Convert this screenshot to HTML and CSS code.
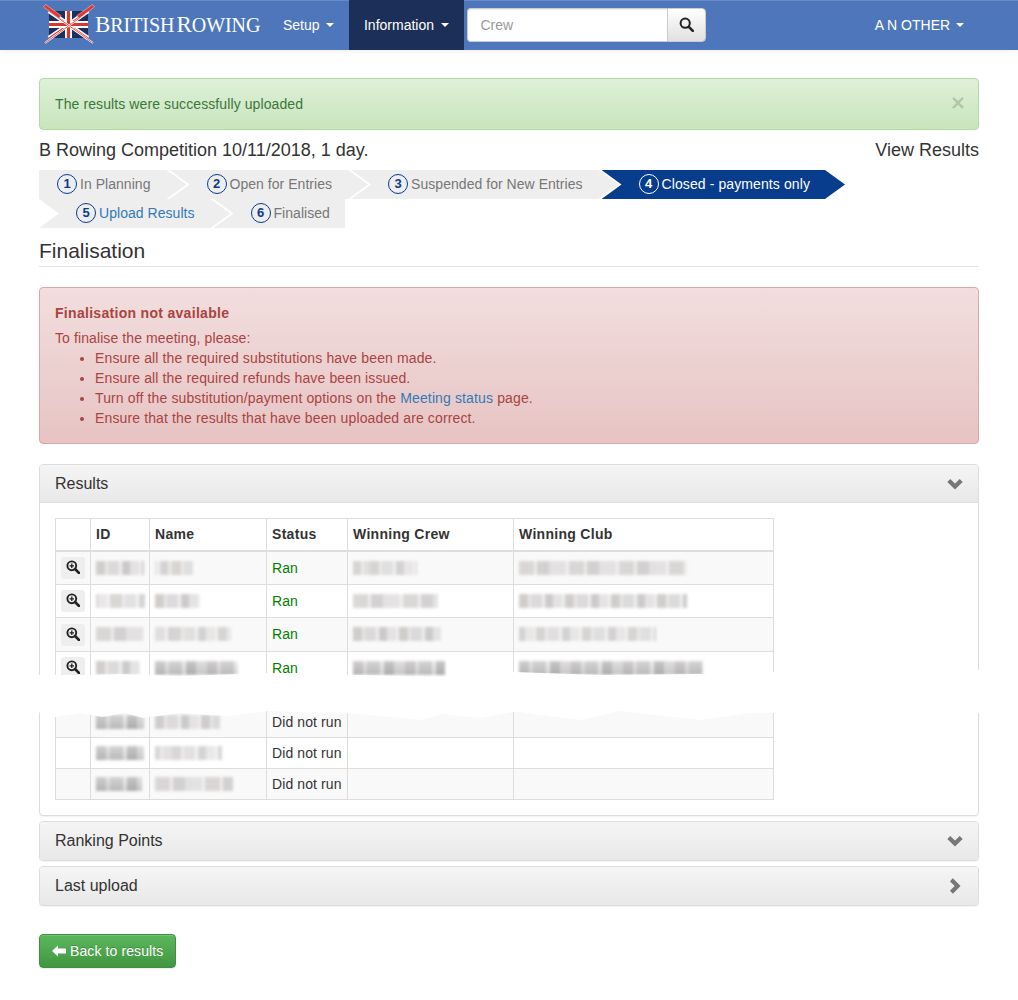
FILE: index.html
```html
<!DOCTYPE html>
<html lang="en">
<head>
<meta charset="utf-8">
<title>Finalisation</title>
<link rel="stylesheet" href="styles.css">
</head>
<body>
<svg class="sprites" width="0" height="0" aria-hidden="true">
  <symbol id="zoom-in" viewBox="0 0 14 14">
    <circle cx="5.8" cy="5.8" r="4.4" fill="none" stroke="#222" stroke-width="1.9"/>
    <path d="M9 9l4 4" stroke="#222" stroke-width="2.6" stroke-linecap="round"/>
    <path d="M3.6 5.8h4.4M5.8 3.6V8" stroke="#222" stroke-width="1.3"/>
  </symbol>
  <symbol id="chev-down" viewBox="0 0 16 16">
    <path d="M1.800 4.400L8 10.600l6.200-6.200" fill="none" stroke="#777" stroke-width="4.200"/>
  </symbol>
  <symbol id="chev-right" viewBox="0 0 16 16">
    <path d="M4.400 1.800L10.600 8 4.400 14.200" fill="none" stroke="#777" stroke-width="4.200"/>
  </symbol>
</svg>

<nav class="navbar">
  <div class="navbar-inner">
    <a class="brand" href="#">
      <svg class="brand-mark" width="52" height="44" viewBox="0 0 52 44" aria-hidden="true">
        <rect x="6" y="11" width="39" height="27" fill="#1d2f5c"/>
        <path d="M6 11l39 27M45 11L6 38" stroke="#fff" stroke-width="4.500"/>
        <path d="M6 11l39 27M45 11L6 38" stroke="#d8392f" stroke-width="1.300"/>
        <path d="M25.500 11v27M6 24.500h39" stroke="#fff" stroke-width="7"/>
        <path d="M25.500 11v27M6 24.500h39" stroke="#d8392f" stroke-width="3.200"/>
        <path d="M2 43L38 17" stroke="#fff" stroke-width="1.800"/>
        <path d="M2 43L38 17" stroke="#e0483c" stroke-width="0.900"/>
        <path d="M50 43L14 17" stroke="#fff" stroke-width="1.800"/>
        <path d="M50 43L14 17" stroke="#e0483c" stroke-width="0.900"/>
        <path d="M0.500 7L2.500 4.500 18 15.500 16 18.500z" fill="#e0382f" stroke="#f4d5d0" stroke-width="0.500"/>
        <path d="M51.500 7L49.500 4.500 34 15.500 36 18.500z" fill="#e0382f" stroke="#f4d5d0" stroke-width="0.500"/>
      </svg>
      <span class="brand-name"><span class="brand-cap">B</span>RITISH<span class="brand-cap brand-second">R</span>OWING</span>
    </a>
    <ul class="nav-list">
      <li><a class="nav-link" href="#">Setup <span class="caret"></span></a></li>
      <li><a class="nav-link nav-link-active" href="#">Information <span class="caret"></span></a></li>
    </ul>
    <form class="search">
      <input class="search-input" type="text" placeholder="Crew">
      <button class="search-btn" type="button" aria-label="Search">
        <svg width="15" height="15" viewBox="0 0 15 15" aria-hidden="true">
          <circle cx="6.200" cy="6.200" r="4.600" fill="none" stroke="#222" stroke-width="2"/>
          <path d="M9.800 9.800l4 4" stroke="#222" stroke-width="2.600" stroke-linecap="round"/>
        </svg>
      </button>
    </form>
    <a class="nav-link nav-user" href="#">A N OTHER <span class="caret"></span></a>
  </div>
</nav>

<main class="container">
  <div class="alert alert-success">
    <span>The results were successfully uploaded</span>
    <span class="close">×</span>
  </div>

  <div class="meeting-row">
    <span>B Rowing Competition 10/11/2018, 1 day.</span>
    <a class="meeting-link" href="#">View Results</a>
  </div>

  <ol class="steps">
    <li class="step step-first"><span class="step-num">1</span>In Planning</li>
    <li class="step"><span class="step-num">2</span>Open for Entries</li>
    <li class="step"><span class="step-num">3</span>Suspended for New Entries</li>
    <li class="step step-current"><span class="step-num">4</span>Closed - payments only</li>
    <li class="step"><span class="step-num">5</span><a class="link" href="#">Upload Results</a></li>
    <li class="step step-last"><span class="step-num">6</span>Finalised</li>
  </ol>

  <h2 class="page-title">Finalisation</h2>

  <div class="alert alert-danger">
    <div class="danger-title">Finalisation not available</div>
    <div>To finalise the meeting, please:</div>
    <ul class="danger-list">
      <li>Ensure all the required substitutions have been made.</li>
      <li>Ensure all the required refunds have been issued.</li>
      <li>Turn off the substitution/payment options on the <a class="link" href="#">Meeting status</a> page.</li>
      <li>Ensure that the results that have been uploaded are correct.</li>
    </ul>
  </div>

  <section class="panel panel-results">
    <div class="panel-heading">
      <span>Results</span>
      <svg class="panel-icon" width="16" height="16"><use href="#chev-down"/></svg>
    </div>
    <div class="panel-body">
      <table class="results">
        <colgroup>
          <col class="c-action"><col class="c-id"><col class="c-name"><col class="c-status"><col class="c-crew"><col class="c-club">
        </colgroup>
        <thead>
          <tr><th></th><th>ID</th><th>Name</th><th>Status</th><th>Winning Crew</th><th>Winning Club</th></tr>
        </thead>
        <tbody>
          <tr class="alt tall-plus">
            <td class="cell-btn"><button class="icon-btn" type="button" aria-label="View"><svg width="14" height="14"><use href="#zoom-in"/></svg></button></td>
            <td><span class="smudge" style="width:48px"></span></td>
            <td><span class="smudge smudge-b" style="width:38px"></span></td>
            <td class="ran">Ran</td>
            <td><span class="smudge smudge-b" style="width:64px"></span></td>
            <td><span class="smudge smudge-c" style="width:168px"></span></td>
          </tr>
          <tr class="tall">
            <td class="cell-btn"><button class="icon-btn" type="button" aria-label="View"><svg width="14" height="14"><use href="#zoom-in"/></svg></button></td>
            <td><span class="smudge smudge-b" style="width:49px"></span></td>
            <td><span class="smudge" style="width:45px"></span></td>
            <td class="ran">Ran</td>
            <td><span class="smudge smudge-c" style="width:85px"></span></td>
            <td><span class="smudge" style="width:168px"></span></td>
          </tr>
          <tr class="alt tall-plus tall-up">
            <td class="cell-btn"><button class="icon-btn" type="button" aria-label="View"><svg width="14" height="14"><use href="#zoom-in"/></svg></button></td>
            <td><span class="smudge smudge-c" style="width:48px"></span></td>
            <td><span class="smudge smudge-b" style="width:76px"></span></td>
            <td class="ran">Ran</td>
            <td><span class="smudge" style="width:88px"></span></td>
            <td><span class="smudge smudge-b" style="width:137px"></span></td>
          </tr>
          <tr class="tall">
            <td class="cell-btn"><button class="icon-btn" type="button" aria-label="View"><svg width="14" height="14"><use href="#zoom-in"/></svg></button></td>
            <td><span class="smudge" style="width:44px"></span></td>
            <td><span class="smudge smudge-dark" style="width:83px"></span></td>
            <td class="ran">Ran</td>
            <td><span class="smudge smudge-dark" style="width:92px"></span></td>
            <td><span class="smudge smudge-dark" style="width:184px"></span></td>
          </tr>
          <tr class="hidden-row"><td></td><td></td><td></td><td></td><td></td><td></td></tr>
          <tr class="alt">
            <td></td>
            <td><span class="smudge smudge-dark" style="width:48px"></span></td>
            <td><span class="smudge" style="width:65px"></span></td>
            <td>Did not run</td><td></td><td></td>
          </tr>
          <tr>
            <td></td>
            <td><span class="smudge smudge-dark" style="width:48px"></span></td>
            <td><span class="smudge smudge-b" style="width:67px"></span></td>
            <td>Did not run</td><td></td><td></td>
          </tr>
          <tr class="alt">
            <td></td>
            <td><span class="smudge smudge-dark" style="width:46px"></span></td>
            <td><span class="smudge smudge-c" style="width:78px"></span></td>
            <td>Did not run</td><td></td><td></td>
          </tr>
        </tbody>
      </table>
    </div>
    <svg class="tear" width="942" height="54" viewBox="38 670 942 54" aria-hidden="true">
      <path fill="#fff" d="M38 675H90L120 674 180 676 268 673 360 675 440 677 514 672 600 675 700 674 774 672 780 670H980V713H774L750 713 700 720 620 711 580 720 520 712 513 712 480 718 443 714 420 720 360 714 268 711 225 716 180 713 143 718 125 713 102 717 80 713 55 717 38 712Z"/>
    </svg>
  </section>

  <section class="panel panel-tight">
    <div class="panel-heading">
      <span>Ranking Points</span>
      <svg class="panel-icon" width="16" height="16"><use href="#chev-down"/></svg>
    </div>
  </section>
  <section class="panel panel-tight">
    <div class="panel-heading">
      <span>Last upload</span>
      <svg class="panel-icon" width="16" height="16"><use href="#chev-right"/></svg>
    </div>
  </section>

  <a class="btn-back" href="#">
    <svg width="14" height="12" viewBox="0 0 14 12" aria-hidden="true">
      <path fill="#fff" d="M0 6L6 .5V3.500H14V8.500H6V11.500Z"/>
    </svg>
    Back to results
  </a>
</main>
</body>
</html>
```
FILE: styles.css
```css
* { box-sizing: border-box; }
html, body { margin: 0; padding: 0; }
body {
  font-family: "Liberation Sans", Arial, sans-serif;
  font-size: 14px;
  line-height: 20px;
  color: #333;
  background: #fff;
  letter-spacing: .1px;
}
a { text-decoration: none; }
.sprites { position: absolute; }
.link { color: #337ab7; }

/* navbar */
.navbar {
  height: 50px;
  background: #4e77bb;
  box-shadow: inset 0 1px 0 rgba(255,255,255,.15), 0 1px 5px rgba(0,0,0,.08);
}
.navbar-inner {
  display: flex;
  align-items: center;
  height: 100%;
  padding: 0 39px;
}
.brand {
  display: flex;
  align-items: center;
  width: 229px;
  height: 100%;
  padding-left: 4px;
  color: #fff;
}
.brand-mark { flex: none; align-self: flex-start; }
.brand-name {
  font-family: "Liberation Serif", "Times New Roman", serif;
  font-size: 20px;
  letter-spacing: -.05px;
  white-space: nowrap;
}
.brand-cap { font-size: 23px; }
.brand-second { margin-left: 2px; }
.nav-list { display: flex; list-style: none; margin: 0; padding: 0; height: 100%; }
.nav-link {
  display: flex;
  align-items: center;
  height: 50px;
  padding: 0 15px;
  color: #fff;
  white-space: pre;
  letter-spacing: 0;
}
.nav-link-active { background: #1c2f58; padding-left: 14.5px; }
.caret {
  display: inline-block;
  margin-left: 3px;
  border-top: 4px solid #fff;
  border-left: 4px solid transparent;
  border-right: 4px solid transparent;
}
.search { display: flex; margin-left: 3.5px; }
.search-input {
  width: 200px;
  height: 34px;
  padding: 6px 12px;
  font: 14px/20px "Liberation Sans", Arial, sans-serif;
  color: #555;
  background: #fff;
  border: 1px solid #ccc;
  border-right: 0;
  border-radius: 4px 0 0 4px;
  box-shadow: inset 0 1px 1px rgba(0,0,0,.075);
  outline: none;
}
.search-input::placeholder { color: #999; opacity: 1; }
.search-btn {
  display: flex;
  align-items: center;
  justify-content: center;
  width: 39px;
  height: 34px;
  padding: 0 0 2px;
  background: linear-gradient(#fff, #e0e0e0);
  border: 1px solid #ccc;
  border-radius: 0 4px 4px 0;
}
.nav-user { margin-left: auto; padding-right: 15px; }
.nav-user .caret { margin-left: 2px; }

/* page */
.container { width: 940px; margin: 28px auto 0 39px; padding-bottom: 32px; }
.alert { border: 1px solid; border-radius: 4px; padding: 15px; }
.alert-success {
  display: flex;
  justify-content: space-between;
  height: 52px;
  color: #3c763d;
  border-color: #b2dba1;
  background: linear-gradient(#dff0d8, #c8e5bc);
}
.close {
  font-size: 24px;
  font-weight: 700;
  line-height: 18px;
  color: #000;
  opacity: .15;
  text-shadow: 0 1px 0 #fff;
  margin-right: -2px;
}
.meeting-row {
  display: flex;
  justify-content: space-between;
  margin-top: 10px;
  font-size: 18px;
  line-height: 20px;
  letter-spacing: 0;
}
.meeting-link { color: #333; }

/* steps */
.steps {
  display: flex;
  flex-wrap: wrap;
  list-style: none;
  margin: 10px 0 0;
  padding: 0;
  letter-spacing: .04px;
}
.step {
  display: flex;
  align-items: center;
  height: 29px;
  margin-right: -17px;
  padding: 0 36px 2px 37px;
  color: #777;
  background: #eee;
  white-space: nowrap;
  clip-path: polygon(0 0, calc(100% - 20px) 0, 100% 50%, calc(100% - 20px) 100%, 0 100%, 20px 50%);
}
.step-first {
  padding-left: 18px;
  clip-path: polygon(0 0, calc(100% - 20px) 0, 100% 50%, calc(100% - 20px) 100%, 0 100%);
}
.step-last {
  margin-right: 0;
  padding-right: 15px;
  clip-path: polygon(0 0, 100% 0, 100% 100%, 0 100%, 20px 50%);
}
.step-current {
  color: #fff;
  background: #083c8c;
  padding-right: 35px;
  letter-spacing: .1px;
}
.step-num {
  display: flex;
  align-items: center;
  justify-content: center;
  flex: none;
  width: 20px;
  height: 20px;
  margin-right: 3px;
  border: 1.5px solid #083c8c;
  border-radius: 50%;
  color: #083c8c;
  font-weight: 700;
  font-size: 13px;
  line-height: 1;
  letter-spacing: 0;
}
.step-current .step-num { border-color: #fff; color: #fff; }

.page-title {
  margin: 11px 0 20px;
  padding-bottom: 3px;
  border-bottom: 1px solid #e5e5e5;
  font-size: 21px;
  font-weight: 400;
  line-height: 24px;
  letter-spacing: 0;
  color: #333;
}

.alert-danger {
  height: 157px;
  color: #a94442;
  border-color: #dca7a7;
  background: linear-gradient(#f2dede, #e7c3c3);
}
.danger-title { font-weight: 700; margin-bottom: 5px; letter-spacing: .3px; }
.danger-list { margin: 0; padding: 0 0 0 40px; letter-spacing: .13px; }

/* panels */
.panel {
  position: relative;
  margin-top: 5px;
  background: #fff;
  border: 1px solid #ddd;
  border-radius: 4px;
  box-shadow: 0 1px 1px rgba(0,0,0,.05);
}
.panel-results { margin-top: 20px; }
.panel-heading {
  display: flex;
  justify-content: space-between;
  align-items: center;
  padding: 10px 15px;
  font-size: 16px;
  line-height: 18px;
  letter-spacing: 0;
  background: linear-gradient(#f5f5f5, #e8e8e8);
  border-radius: 3px;
}
.panel-results .panel-heading {
  height: 38px;
  border-bottom: 1px solid #ddd;
  border-radius: 3px 3px 0 0;
}
.panel-icon { flex: none; }
.panel-body { padding: 15px; }
.tear { position: absolute; left: -2px; top: 205px; }

/* table */
.results {
  table-layout: fixed;
  width: 719px;
  border-collapse: collapse;
}
.c-action { width: 35px; }
.c-id { width: 59px; }
.c-name { width: 117px; }
.c-status { width: 81px; }
.c-crew { width: 166px; }
.c-club { width: 260px; }
.results th, .results td {
  padding: 5px;
  border: 1px solid #ddd;
  text-align: left;
  vertical-align: middle;
  line-height: 20px;
}
.results th {
  border-bottom-width: 2px;
  font-weight: 700;
  height: 32px;
  letter-spacing: .3px;
}
.alt td { background: #f9f9f9; }
.tall td { height: 33px; }
.tall-plus td { height: 34px; }
.tall-up td { padding-bottom: 6px; }
.hidden-row td { height: 22px; padding: 0; }
.ran { color: #008000; }
.results .cell-btn { padding: 0 5px; text-align: center; }
.icon-btn {
  display: inline-flex;
  align-items: center;
  justify-content: center;
  vertical-align: middle;
  width: 24px;
  height: 22px;
  padding: 0 0 2px;
  background: #eee;
  border: 0;
  border-radius: 3px;
}
.smudge {
  display: block;
  height: 14px;
  background:
    repeating-linear-gradient(90deg, #c9c5c3 0 9px, #e6e4e3 9px 12px, #d6d4d4 12px 23px, #f1efef 23px 26px, #c4c2c3 26px 34px, #e1dfde 34px 43px, #efeeee 43px 46px);
  filter: blur(1.600px);
  opacity: .85;
}
.smudge-b { background-position: 17px 0; opacity: .7; }
.smudge-c {
  background:
    repeating-linear-gradient(90deg, #d2cfcd 0 15px, #ecebea 15px 18px, #c9c7c8 18px 30px, #dedcdc 30px 47px, #f0efef 47px 50px);
  opacity: .8;
}
.smudge-dark {
  background:
    linear-gradient(rgba(255,255,255,.25), rgba(120,120,120,.2)),
    repeating-linear-gradient(90deg, #b5b2b2 0 10px, #d9d7d6 10px 14px, #bdbbbb 14px 27px, #e6e5e5 27px 31px, #a9a8a9 31px 41px, #cfcdcc 41px 52px);
  opacity: .85;
}

.btn-back {
  display: inline-flex;
  align-items: center;
  gap: 4px;
  height: 34px;
  margin-top: 28px;
  padding: 0 12px;
  color: #fff;
  background: linear-gradient(#5cb85c, #419641);
  border: 1px solid #3e8f3e;
  border-radius: 4px;
  text-shadow: 0 -1px 0 rgba(0,0,0,.2);
  box-shadow: inset 0 1px 0 rgba(255,255,255,.15), 0 1px 1px rgba(0,0,0,.075);
}
```
